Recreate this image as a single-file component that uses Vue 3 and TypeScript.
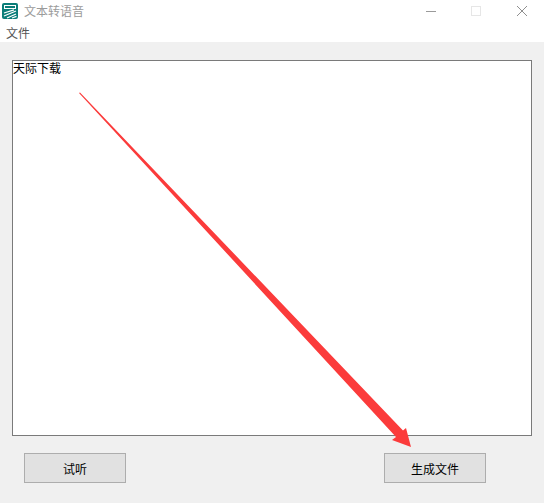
<script setup lang="ts">
const title = '文本转语音'
</script>

<template>
  <div class="window">
    <header class="titlebar">
      <svg class="logo" width="16" height="16" viewBox="0 0 16 16">
        <rect x="0" y="0" width="16" height="16" rx="2" fill="#0a7d78" />
        <rect x="2.500" y="2.500" width="11" height="3" fill="none" stroke="#fff" stroke-width="1" />
        <path d="M2 10 L12 6.800 M2 13 L14 8 M5 15 L14 11 M10 15 L14.500 13.300" stroke="#fff" stroke-width="1.300" fill="none" />
      </svg>
      <span class="title">{{ title }}</span>
      <div class="controls">
        <svg width="140" height="24" viewBox="0 0 140 24">
          <path d="M22 11.500 H32" stroke="#9a9a9a" stroke-width="1" />
          <rect x="67.500" y="6.500" width="9" height="9" fill="none" stroke="#e6e6e6" stroke-width="1" />
          <path d="M113 6 L123 16 M123 6 L113 16" stroke="#8f8f8f" stroke-width="1" />
        </svg>
      </div>
    </header>
    <nav class="menubar"><span>文件</span></nav>
    <main class="content">
      <div class="editor">天际下载</div>
      <div class="actions">
        <button type="button">试听</button>
        <button type="button">生成文件</button>
      </div>
      <svg class="arrow" width="544" height="503" viewBox="0 0 544 503">
        <path d="M79 93 L80 92.500 L403 430.500 L406 428 L411 447 L392 440 L396 437 Z" fill="#fb3b3b" />
      </svg>
    </main>
  </div>
</template>

<style>
html, body { margin: 0; background: #f0f0f0; }
</style>

<style scoped>
.window {
  width: 544px;
  height: 503px;
  position: relative;
  overflow: hidden;
  font-family: "Noto Sans CJK SC", "Liberation Sans", sans-serif;
  background: #f0f0f0;
}
.titlebar {
  height: 24px;
  background: #fff;
  display: flex;
  align-items: center;
  padding-left: 2px;
  gap: 6px;
}
.logo { flex: none; margin-top: -2px; }
.title {
  font-size: 12px;
  color: #9b9b9b;
  margin-top: -4px;
}
.controls {
  position: absolute;
  left: 404px;
  top: 0;
  height: 24px;
}
.controls svg { display: block; }
.menubar {
  height: 18px;
  background: #fff;
  padding-left: 6px;
  font-size: 12px;
  line-height: 18px;
  color: #555;
}
.content {
  padding: 18px 12px 0;
}
.editor {
  box-sizing: border-box;
  height: 376px;
  width: 520px;
  background: #fff;
  border: 1px solid #7a7a7a;
  font-size: 12px;
  line-height: 14px;
  color: #000;
}
.actions {
  display: flex;
  justify-content: space-between;
  padding: 17px 46px 0 12px;
}
button {
  box-sizing: border-box;
  width: 102px;
  height: 30px;
  background: #e1e1e1;
  border: 1px solid #adadad;
  border-radius: 0;
  padding: 0;
  font: inherit;
  font-size: 12px;
  color: #000;
}
.arrow {
  position: absolute;
  left: 0;
  top: 0;
  pointer-events: none;
}
</style>
